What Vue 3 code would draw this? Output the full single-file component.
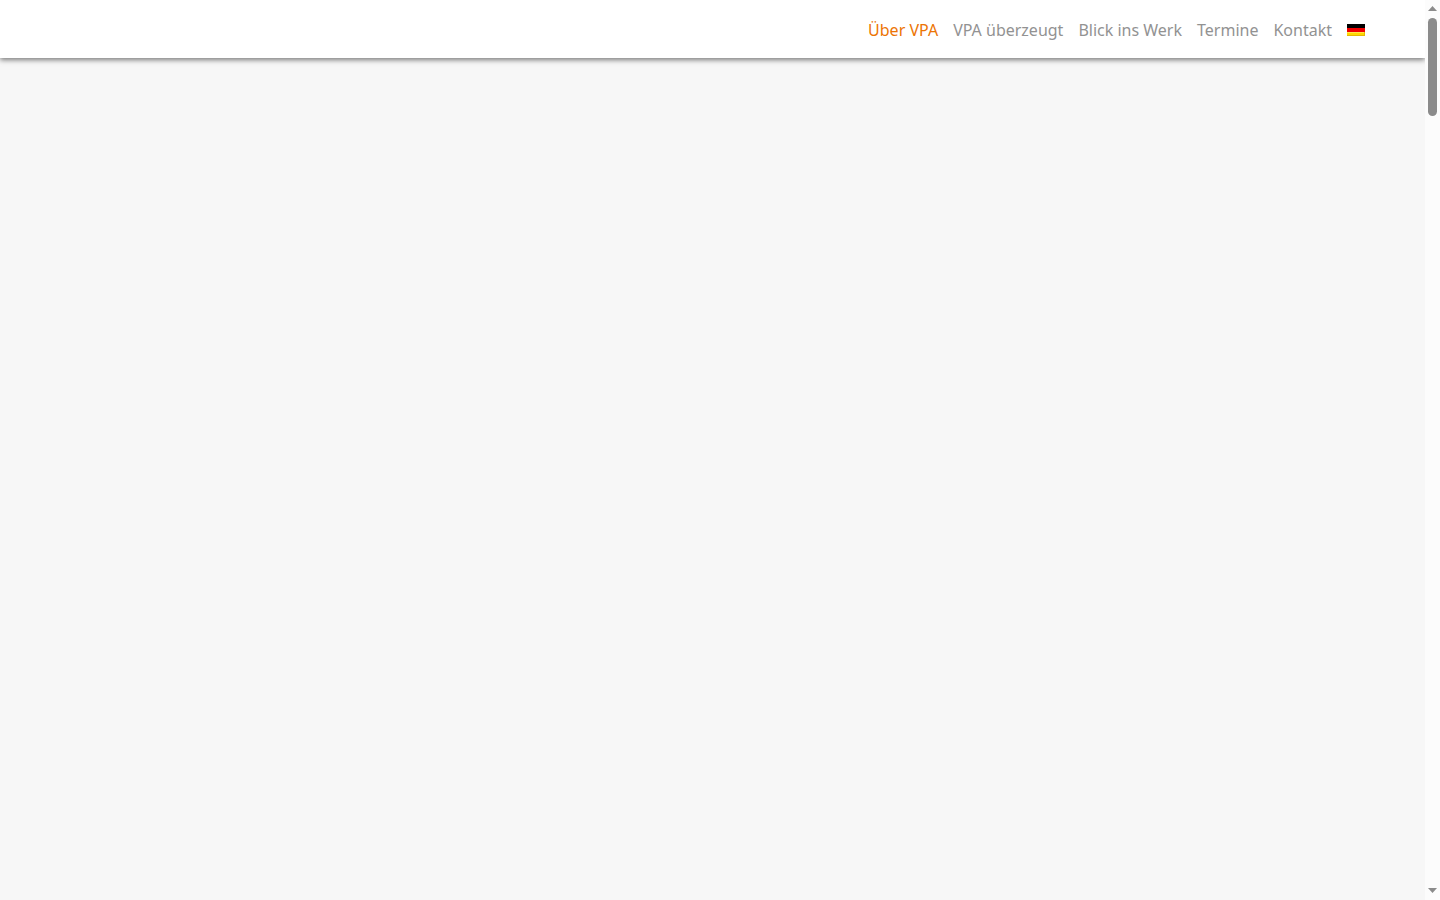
<script setup>
const links = [
  { label: 'Über VPA', href: '#ueber', active: true },
  { label: 'VPA überzeugt', href: '#ueberzeugt' },
  { label: 'Blick ins Werk', href: '#werk' },
  { label: 'Termine', href: '#termine' },
  { label: 'Kontakt', href: '#kontakt' },
]
</script>

<template>
  <div class="window">
    <div class="page">
      <header class="topbar">
        <nav class="nav" aria-label="Hauptnavigation">
          <a
            v-for="link in links"
            :key="link.href"
            :href="link.href"
            class="link"
            :class="{ active: link.active }"
          >{{ link.label }}</a>
          <a href="#sprache" class="flag" aria-label="Deutsch">
            <svg width="18" height="12" viewBox="0 0 18 12" aria-hidden="true">
              <rect width="18" height="4" fill="#000" />
              <rect y="4" width="18" height="4" fill="#f00000" />
              <rect y="8" width="18" height="4" fill="#ffd800" />
              <path d="M0 8h18v1H0z" fill="#ffe650" />
              <path d="M0 11h18v1H0zM17 8h1v4h-1z" fill="#e5b800" />
            </svg>
          </a>
        </nav>
      </header>
      <main class="content"></main>
    </div>
    <div class="scrollbar" aria-hidden="true">
      <svg class="arrow" width="15" height="16" viewBox="0 0 15 16"><path d="M3 11L7.500 6L12 11z" fill="#8b8b8b" /></svg>
      <div class="track"><div class="thumb"></div></div>
      <svg class="arrow" width="15" height="16" viewBox="0 0 15 16"><path d="M3 4L7.500 9L12 4z" fill="#8b8b8b" /></svg>
    </div>
  </div>
</template>

<style scoped>
.window {
  display: flex;
  min-height: 100vh;
  background: #f7f7f7;
  font-family: "Noto Sans", sans-serif;
}
.page {
  display: flex;
  flex: 1;
  flex-direction: column;
  overflow: hidden;
}
.topbar {
  padding: 18px 60px 16px;
  background: #fff;
  box-shadow: 0 2px 5px rgba(0, 0, 0, 0.5);
}
.nav {
  display: flex;
  align-items: center;
  justify-content: flex-end;
  gap: 15px;
}
.link {
  color: #929292;
  font-size: 16px;
  line-height: 24px;
  text-decoration: none;
  white-space: nowrap;
}
.link.active {
  color: #ec7404;
}
.flag,
.flag svg,
.arrow {
  display: block;
}
.content {
  flex: 1;
}
.scrollbar {
  display: flex;
  flex-direction: column;
  width: 15px;
  background: #fcfcfc;
}
.track {
  display: flex;
  flex: 1;
  flex-direction: column;
  align-items: center;
  padding: 2px 0;
}
.thumb {
  flex: 0 0 98px;
  width: 9px;
  border-radius: 5px;
  background: #8b8b8b;
}
</style>

<style>
body {
  margin: 0;
}
</style>
